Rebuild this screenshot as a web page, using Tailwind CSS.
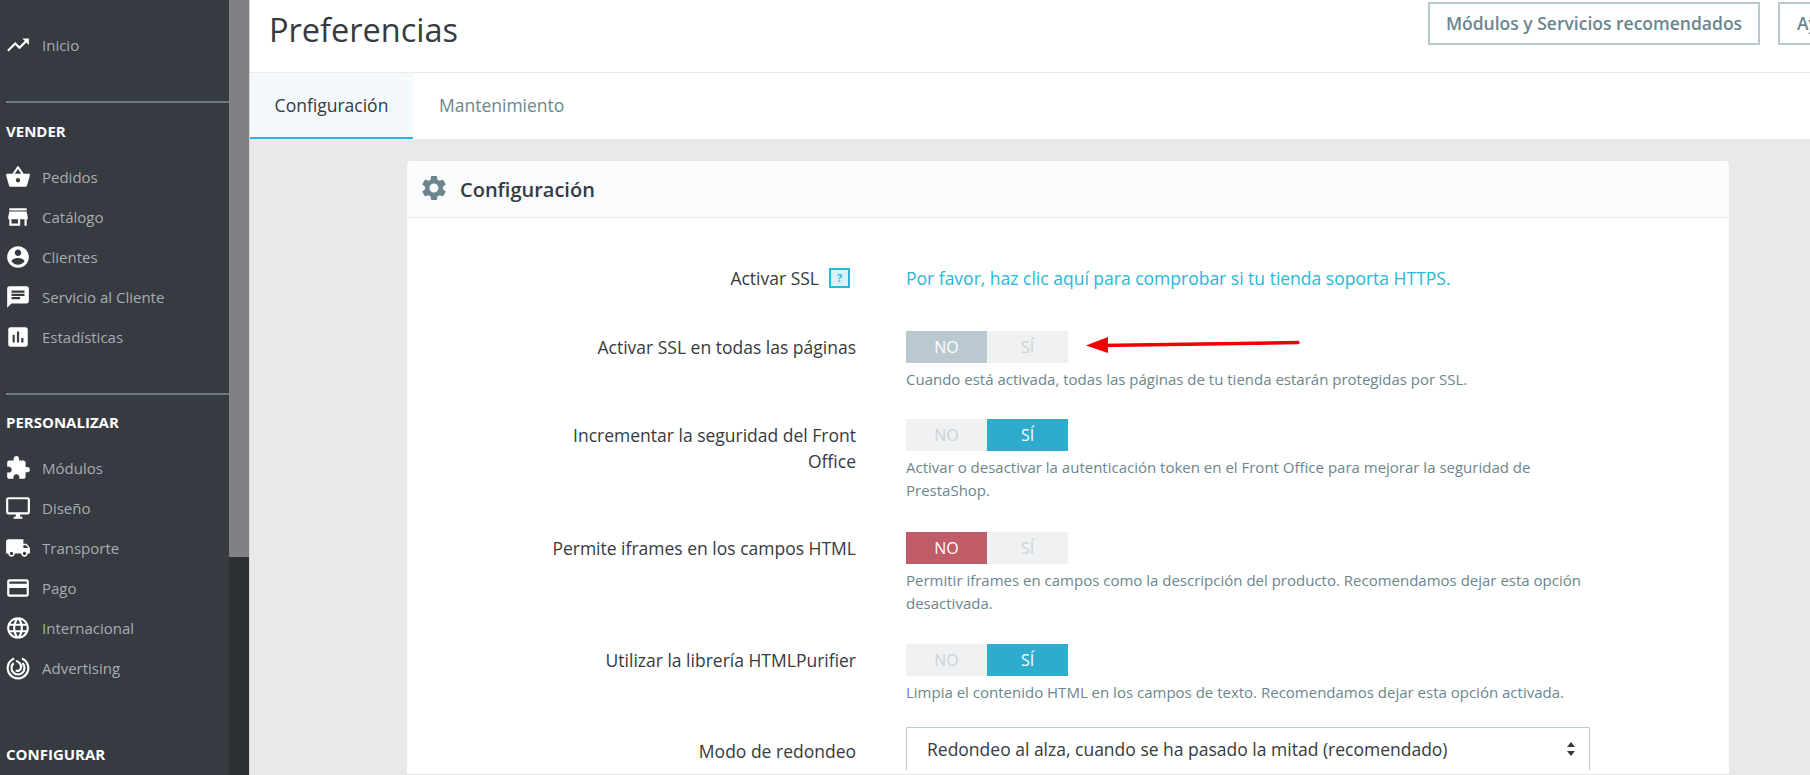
<!DOCTYPE html>
<html lang="es">
<head>
    <meta charset="UTF-8">
    <title>Preferencias</title>
    <script src="https://cdn.jsdelivr.net/npm/@tailwindcss/browser@4"></script>
</head>
<body class="h-screen overflow-hidden flex bg-[#e8e9eb] font-['Open_Sans',sans-serif] text-[#363a41]">

<!-- Sidebar -->
<aside class="w-[250px] h-full flex shrink-0 border-r border-[#d5d6d8]">
    <nav class="w-[229px] h-full bg-[#363a41] text-[#a9acb0] text-[15px] overflow-hidden">
        <a class="flex items-center h-10 mt-[25px]"><svg class="w-[26px] h-[26px] ml-[5px] mr-[11px] fill-white" viewBox="0 0 24 24"><path d="M16 6l2.29 2.29-4.88 4.88-4-4L2 16.59 3.41 18l6-6 4 4 6.3-6.29L22 12V6z"/></svg>Inicio</a>
        <div class="mt-[36px] ml-[6px] h-[2px] bg-[#6c7a80]"></div>
        <div class="mt-[18px] ml-[6px] h-5 leading-5 text-white font-bold">VENDER</div>
        <div class="mt-[16px]">
            <a class="flex items-center h-10"><svg class="w-[26px] h-[26px] ml-[5px] mr-[11px] fill-white" viewBox="0 0 24 24"><path d="M17.21 9l-4.38-6.56c-.19-.28-.51-.42-.83-.42-.32 0-.64.14-.83.43L6.79 9H2c-.55 0-1 .45-1 1 0 .09.01.18.04.27l2.54 9.27c.23.84 1 1.46 1.92 1.46h13c.92 0 1.69-.62 1.93-1.46l2.54-9.27L23 10c0-.55-.45-1-1-1h-4.79zM9 9l3-4.4L15 9H9zm3 8c-1.1 0-2-.9-2-2s.9-2 2-2 2 .9 2 2-.9 2-2 2z"/></svg>Pedidos</a>
            <a class="flex items-center h-10"><svg class="w-[26px] h-[26px] ml-[5px] mr-[11px] fill-white" viewBox="0 0 24 24"><path d="M20 4H4v2h16V4zm1 10v-2l-1-5H4l-1 5v2h1v6h10v-6h4v6h2v-6h1zm-9 4H6v-4h6v4z"/></svg>Catálogo</a>
            <a class="flex items-center h-10"><svg class="w-[26px] h-[26px] ml-[5px] mr-[11px] fill-white" viewBox="0 0 24 24"><path d="M12 2C6.48 2 2 6.48 2 12s4.48 10 10 10 10-4.48 10-10S17.52 2 12 2zm0 3c1.66 0 3 1.34 3 3s-1.34 3-3 3-3-1.34-3-3 1.34-3 3-3zm0 14.2c-2.5 0-4.71-1.28-6-3.22.03-1.99 4-3.08 6-3.08 1.99 0 5.97 1.09 6 3.08-1.29 1.94-3.5 3.22-6 3.22z"/></svg>Clientes</a>
            <a class="flex items-center h-10"><svg class="w-[26px] h-[26px] ml-[5px] mr-[11px] fill-white" viewBox="0 0 24 24"><path d="M20 2H4c-1.1 0-1.99.9-1.99 2L2 22l4-4h14c1.1 0 2-.9 2-2V4c0-1.1-.9-2-2-2zM6 9h12v2H6V9zm8 5H6v-2h8v2zm4-6H6V6h12v2z"/></svg>Servicio al Cliente</a>
            <a class="flex items-center h-10"><svg class="w-[26px] h-[26px] ml-[5px] mr-[11px] fill-white" viewBox="0 0 24 24"><path d="M19 3H5c-1.1 0-2 .9-2 2v14c0 1.1.9 2 2 2h14c1.1 0 2-.9 2-2V5c0-1.1-.9-2-2-2zM9 17H7v-7h2v7zm4 0h-2V7h2v10zm4 0h-2v-4h2v4z"/></svg>Estadísticas</a>
        </div>
        <div class="mt-[36px] ml-[6px] h-[2px] bg-[#6c7a80]"></div>
        <div class="mt-[17px] ml-[6px] h-5 leading-5 text-white font-bold">PERSONALIZAR</div>
        <div class="mt-[16px]">
            <a class="flex items-center h-10"><svg class="w-[26px] h-[26px] ml-[5px] mr-[11px] fill-white" viewBox="0 0 24 24"><path d="M20.5 11H19V7c0-1.1-.9-2-2-2h-4V3.5C13 2.12 11.88 1 10.5 1S8 2.12 8 3.5V5H4c-1.1 0-1.99.9-1.99 2v3.8H3.5c1.49 0 2.7 1.21 2.7 2.7s-1.21 2.7-2.7 2.7H2V20c0 1.1.9 2 2 2h3.8v-1.5c0-1.49 1.21-2.7 2.7-2.7 1.49 0 2.7 1.21 2.7 2.7V22H17c1.1 0 2-.9 2-2v-4h1.5c1.38 0 2.5-1.12 2.5-2.5S21.88 11 20.5 11z"/></svg>Módulos</a>
            <a class="flex items-center h-10"><svg class="w-[26px] h-[26px] ml-[5px] mr-[11px] fill-white" viewBox="0 0 24 24"><path d="M21 2H3c-1.1 0-2 .9-2 2v12c0 1.1.9 2 2 2h7v2H8v2h8v-2h-2v-2h7c1.1 0 2-.9 2-2V4c0-1.1-.9-2-2-2zm0 14H3V4h18v12z"/></svg>Diseño</a>
            <a class="flex items-center h-10"><svg class="w-[26px] h-[26px] ml-[5px] mr-[11px] fill-white" viewBox="0 0 24 24"><path d="M20 8h-3V4H3c-1.1 0-2 .9-2 2v11h2c0 1.66 1.34 3 3 3s3-1.34 3-3h6c0 1.66 1.34 3 3 3s3-1.34 3-3h2v-5l-3-4zM6 18.5c-.83 0-1.5-.67-1.5-1.5s.67-1.5 1.5-1.5 1.5.67 1.5 1.5-.67 1.5-1.5 1.5zm13.5-9l1.96 2.5H17V9.5h2.5zm-1.5 9c-.83 0-1.5-.67-1.5-1.5s.67-1.5 1.5-1.5 1.5.67 1.5 1.5-.67 1.5-1.5 1.5z"/></svg>Transporte</a>
            <a class="flex items-center h-10"><svg class="w-[26px] h-[26px] ml-[5px] mr-[11px] fill-white" viewBox="0 0 24 24"><path d="M20 4H4c-1.11 0-1.99.89-1.99 2L2 18c0 1.11.89 2 2 2h16c1.11 0 2-.89 2-2V6c0-1.11-.89-2-2-2zm0 14H4v-6h16v6zm0-10H4V6h16v2z"/></svg>Pago</a>
            <a class="flex items-center h-10"><svg class="w-[26px] h-[26px] ml-[5px] mr-[11px] fill-white" viewBox="0 0 24 24"><path d="M11.99 2C6.47 2 2 6.48 2 12s4.47 10 9.99 10C17.52 22 22 17.52 22 12S17.52 2 11.99 2zm6.93 6h-2.95c-.32-1.25-.78-2.45-1.38-3.56 1.84.63 3.37 1.91 4.33 3.56zM12 4.04c.83 1.2 1.48 2.53 1.91 3.96h-3.82c.43-1.43 1.08-2.76 1.91-3.96zM4.26 14C4.1 13.36 4 12.69 4 12s.1-1.36.26-2h3.38c-.08.66-.14 1.32-.14 2 0 .68.06 1.34.14 2H4.26zm.82 2h2.95c.32 1.25.78 2.45 1.38 3.56-1.84-.63-3.37-1.9-4.33-3.56zm2.95-8H5.08c.96-1.66 2.49-2.93 4.33-3.56C8.81 5.55 8.35 6.75 8.03 8zM12 19.96c-.83-1.2-1.48-2.53-1.91-3.96h3.82c-.43 1.43-1.08 2.76-1.91 3.96zM14.34 14H9.66c-.09-.66-.16-1.32-.16-2 0-.68.07-1.35.16-2h4.68c.09.65.16 1.32.16 2 0 .68-.07 1.34-.16 2zm.25 5.56c.6-1.11 1.06-2.31 1.38-3.56h2.95c-.96 1.65-2.49 2.93-4.33 3.56zM16.36 14c.08-.66.14-1.32.14-2 0-.68-.06-1.34-.14-2h3.38c.16.64.26 1.31.26 2s-.1 1.36-.26 2h-3.38z"/></svg>Internacional</a>
            <a class="flex items-center h-10"><svg class="w-[26px] h-[26px] ml-[5px] mr-[11px] fill-none stroke-white" viewBox="0 0 24 24" stroke-width="2"><path d="M8.5 3.2a9.5 9.5 0 1 0 7 0"/><path d="M8 7.5a6 6 0 1 0 8 0"/><path d="M10 5.5c0 0 2 0 3.5 2s1.5 4.5 .5 6-3 1.5-4 .5"/></svg>Advertising</a>
        </div>
        <div class="mt-[56px] ml-[6px] h-5 leading-5 text-white font-bold">CONFIGURAR</div>
    </nav>
    <div class="w-[20px] h-full bg-[#2d3033]">
        <div class="h-[557px] bg-[#7f8184]"></div>
    </div>
</aside>

<main class="relative flex-1 min-w-0 flex flex-col">
    <!-- Header -->
    <header class="h-[73px] bg-white border-b border-[#e8eaec] flex shrink-0 justify-between overflow-hidden">
        <h1 class="ml-[19px] mt-[6px] h-[48px] leading-[48px] text-[32.5px] text-[#363a41]">Preferencias</h1>
        <div class="flex items-start pt-[2px] gap-[18px] w-[382px] shrink-0">
            <button class="h-[43px] w-[332px] shrink-0 border-2 border-[#b9c8cd] text-[#6c868e] text-[17.5px] font-semibold">Módulos y Servicios recomendados</button>
            <button class="h-[43px] w-[100px] shrink-0 border-2 border-[#b9c8cd] text-[#6c868e] text-[17.5px] font-semibold text-left pl-[17px]">Ayuda</button>
        </div>
    </header>

    <!-- Tabs -->
    <div class="h-[66px] bg-white flex shrink-0 text-[17.5px]">
        <a class="relative w-[163px] bg-[#f4f9fc] border-b-2 border-[#25b9d7] flex items-center justify-center">Configuración<span class="absolute right-0 top-[5px] w-[11px] h-[2px] bg-white"></span></a>
        <a class="ml-[26px] flex items-center pb-[2px] text-[#6c868e]">Mantenimiento</a>
    </div>

    <!-- Panel -->
    <section class="mt-[21px] ml-[156px] w-[1324px] flex-1 bg-white border border-[#e4e6e8] rounded-t-[5px] overflow-hidden">
        <div class="h-[57px] bg-[#fafbfc] border-b border-[#eef1f3] flex items-center pl-[12px]">
            <svg class="w-[30px] h-[30px] fill-[#6c868e] -mt-[3px]" viewBox="0 0 24 24"><path d="M19.14 12.94c.04-.3.06-.61.06-.94 0-.32-.02-.64-.07-.94l2.03-1.58c.18-.14.23-.41.12-.61l-1.92-3.32c-.12-.22-.37-.29-.59-.22l-2.39.96c-.5-.38-1.03-.7-1.62-.94l-.36-2.54c-.04-.24-.24-.41-.48-.41h-3.84c-.24 0-.43.17-.47.41l-.36 2.54c-.59.24-1.13.57-1.62.94l-2.39-.96c-.22-.08-.47 0-.59.22L2.74 8.87c-.12.21-.08.47.12.61l2.03 1.58c-.05.3-.09.63-.09.94s.02.64.07.94l-2.03 1.58c-.18.14-.23.41-.12.61l1.92 3.32c.12.22.37.29.59.22l2.39-.96c.5.38 1.03.7 1.62.94l.36 2.54c.05.24.24.41.48.41h3.84c.24 0 .44-.17.47-.41l.36-2.54c.59-.24 1.13-.56 1.62-.94l2.39.96c.22.08.47 0 .59-.22l1.92-3.32c.12-.22.07-.47-.12-.61l-2.01-1.58zM12 15.6c-1.98 0-3.6-1.62-3.6-3.6s1.62-3.6 3.6-3.6 3.6 1.62 3.6 3.6-1.62 3.6-3.6 3.6z"/></svg>
            <h2 class="ml-[11px] pt-[1px] text-[20px] font-semibold">Configuración</h2>
        </div>

        <div class="pt-[44px] text-[17.5px]">
            <div class="flex mb-[37px]">
                <div class="w-[449px] flex justify-end items-center">
                    <span class="leading-[26px] -mt-[1px]">Activar SSL</span>
                    <span class="ml-[10px] mr-[6px] w-[21px] h-[20px] border-2 border-[#25b9d7] bg-[#d9f2f8] text-[#25b9d7] text-[11px] font-bold leading-4 text-center">?</span>
                </div>
                <a class="ml-[50px] h-8 leading-8 text-[#25b9d7]">Por favor, haz clic aquí para comprobar si tu tienda soporta HTTPS.</a>
            </div>

            <div class="flex mb-[28px]">
                <label class="w-[449px] text-right pt-[3px] leading-[26px]">Activar SSL en todas las páginas</label>
                <div class="ml-[50px] w-[684px]">
                    <div class="flex h-8 w-[162px] text-[16px] leading-8 text-center">
                        <span class="w-[81px] bg-[#b9c9cf] text-white">NO</span>
                        <span class="w-[81px] bg-[#eff1f2] text-[#c8d4d8]">SÍ</span>
                    </div>
                    <p class="mt-[5px] text-[15px] leading-[23px] text-[#6c868e]">Cuando está activada, todas las páginas de tu tienda estarán protegidas por SSL.</p>
                </div>
            </div>

            <div class="flex mb-[30px]">
                <label class="w-[449px] text-right pt-[3px] pl-[140px] leading-[26px]">Incrementar la seguridad del Front Office</label>
                <div class="ml-[50px] w-[684px]">
                    <div class="flex h-8 w-[162px] text-[16px] leading-8 text-center">
                        <span class="w-[81px] bg-[#eff1f2] text-[#c8d4d8]">NO</span>
                        <span class="w-[81px] bg-[#2eacce] text-white">SÍ</span>
                    </div>
                    <p class="mt-[5px] text-[15px] leading-[23px] text-[#6c868e]">Activar o desactivar la autenticación token en el Front Office para mejorar la seguridad de PrestaShop.</p>
                </div>
            </div>

            <div class="flex mb-[29px]">
                <label class="w-[449px] text-right pt-[3px] leading-[26px]">Permite iframes en los campos HTML</label>
                <div class="ml-[50px] w-[684px]">
                    <div class="flex h-8 w-[162px] text-[16px] leading-8 text-center">
                        <span class="w-[81px] bg-[#c05c67] text-white">NO</span>
                        <span class="w-[81px] bg-[#eff1f2] text-[#c8d4d8]">SÍ</span>
                    </div>
                    <p class="mt-[5px] text-[15px] leading-[23px] text-[#6c868e]">Permitir iframes en campos como la descripción del producto. Recomendamos dejar esta opción desactivada.</p>
                </div>
            </div>

            <div class="flex mb-[23px]">
                <label class="w-[449px] text-right pt-[3px] leading-[26px]">Utilizar la librería HTMLPurifier</label>
                <div class="ml-[50px] w-[684px]">
                    <div class="flex h-8 w-[162px] text-[16px] leading-8 text-center">
                        <span class="w-[81px] bg-[#eff1f2] text-[#c8d4d8]">NO</span>
                        <span class="w-[81px] bg-[#2eacce] text-white">SÍ</span>
                    </div>
                    <p class="mt-[5px] text-[15px] leading-[23px] text-[#6c868e]">Limpia el contenido HTML en los campos de texto. Recomendamos dejar esta opción activada.</p>
                </div>
            </div>

            <div class="flex">
                <label class="w-[449px] text-right pt-[11px] leading-[26px]">Modo de redondeo</label>
                <div class="ml-[50px] w-[684px] h-[43px] border-x border-t border-[#bbcdd2] flex items-center justify-between pl-[20px] pr-[13px]">
                    <span>Redondeo al alza, cuando se ha pasado la mitad (recomendado)</span>
                    <svg class="w-[10px] h-[16px] fill-[#363a41]" viewBox="0 0 10 16"><path d="M5 1l4 5H1zM5 15l-4-5h8z"/></svg>
                </div>
            </div>
        </div>
    </section>

    <!-- Annotation arrow drawn over the page -->
    <svg class="absolute left-[830px] top-[330px] w-[225px] h-[30px]" viewBox="0 0 225 30">
        <path d="M218 12.5L20 15.5" stroke="#f00000" stroke-width="3.5" stroke-linecap="round" fill="none"/>
        <path d="M6 15.5L28 7v16z" fill="#f00000"/>
    </svg>
</main>
</body>
</html>
